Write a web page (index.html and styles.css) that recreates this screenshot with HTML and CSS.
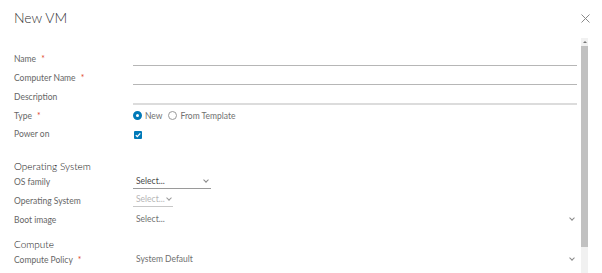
FILE: index.html
```html
<!DOCTYPE html>
<html lang="en">
<head>
    <meta charset="UTF-8">
    <title>New VM</title>
    <link rel="stylesheet" href="styles.css">
</head>
<body>

<div class="modal">
    <div class="modal-header">
        <div class="modal-title">New VM</div>
        <svg class="close" width="9" height="9" viewBox="0 0 9 9">
            <path d="M0.5 0.5 L8.5 8.5 M8.5 0.5 L0.5 8.5" stroke="#8a8a8a" stroke-width="1" fill="none"/>
        </svg>
    </div>

    <div class="modal-body">
        <div class="form">
            <div class="row">
                <div class="label">Name <span class="req">*</span></div>
                <div class="input"></div>
            </div>
            <div class="row">
                <div class="label">Computer Name <span class="req">*</span></div>
                <div class="input"></div>
            </div>
            <div class="row">
                <div class="label">Description</div>
                <div class="input textarea"></div>
            </div>
            <div class="row">
                <div class="label">Type <span class="req">*</span></div>
                <div class="radios">
                    <span class="radio checked"></span><span class="radio-label">New</span>
                    <span class="radio"></span><span class="radio-label">From Template</span>
                </div>
            </div>
            <div class="row">
                <div class="label">Power on</div>
                <div>
                    <span class="checkbox">
                        <svg width="8" height="8" viewBox="0 0 8 8">
                            <path d="M1.8 4.1 L3.3 5.6 L6.3 2.4" stroke="#fff" stroke-width="1.3" fill="none"/>
                        </svg>
                    </span>
                </div>
            </div>

            <div class="section">Operating System</div>
            <div class="row">
                <div class="label">OS family</div>
                <div class="select wide">Select...<span class="chev"></span></div>
            </div>
            <div class="row">
                <div class="label">Operating System</div>
                <div class="select narrow disabled">Select...<span class="chev"></span></div>
            </div>
            <div class="row">
                <div class="label">Boot image</div>
                <div class="select full">Select...<span class="chev"></span></div>
            </div>

            <div class="section compute">Compute</div>
            <div class="row">
                <div class="label">Compute Policy <span class="req">*</span></div>
                <div class="select full">System Default<span class="chev"></span></div>
            </div>
        </div>

        <div class="scrollbar">
            <div class="scroll-up"><span></span></div>
            <div class="scroll-thumb"></div>
            <div class="scroll-track"></div>
        </div>
    </div>
</div>

</body>
</html>
```

FILE: styles.css
```css
body {
    margin: 0;
    background: #fff;
    font-family: 'Lato', 'Open Sans', sans-serif;
    color: #565656;
}

.modal {
    width: 602px;
    height: 273px;
    display: flex;
    flex-direction: column;
    overflow: hidden;
}

.modal-header {
    height: 38px;
    flex-shrink: 0;
    padding: 9px 12px 0 14px;
    box-sizing: border-box;
    display: flex;
    justify-content: space-between;
    align-items: flex-start;
}

.modal-title {
    font-size: 14px;
    line-height: 18px;
    font-weight: 300;
    color: #333;
}

.close {
    margin-top: 5px;
}

.modal-body {
    flex: 1;
    display: flex;
    min-height: 0;
}

.form {
    flex: 1;
    padding: 12px 2px 0 14px;
}

.row {
    display: grid;
    grid-template-columns: 119px 1fr;
    align-items: center;
    height: 18.75px;
    font-size: 8.5px;
}

.label {
    color: #666;
}

.req {
    color: #e0492f;
    margin-left: 3px;
}

.input {
    height: 12px;
    border-bottom: 1px solid #b6b6b6;
}

.input.textarea {
    border-bottom: 2px solid #dcdcdc;
    height: 12px;
    margin-top: 2px;
}

.radios {
    display: flex;
    align-items: center;
}

.radio {
    width: 9px;
    height: 9px;
    box-sizing: border-box;
    border-radius: 50%;
    border: 1px solid #9a9a9a;
    margin-right: 3px;
}

.radio.checked {
    border: 3px solid #0079b8;
    background: #fff;
}

.radio-label {
    color: #707070;
    margin-right: 6px;
}

.checkbox {
    width: 8px;
    height: 8px;
    margin-left: 1px;
    margin-top: 1px;
    background: #0079b8;
    border-radius: 1px;
    display: flex;
}

.select {
    position: relative;
    height: 12px;
    line-height: 11px;
    padding-left: 3px;
    color: #484848;
    border-bottom: 1px solid #9a9a9a;
    box-sizing: content-box;
}

.select.wide {
    width: 75px;
}

.select.narrow {
    width: 37px;
    color: #b5b5b5;
    border-bottom-color: #c8c8c8;
}

.select.full {
    border-bottom: none;
    color: #707070;
}

.chev {
    position: absolute;
    right: 3px;
    top: 2px;
    width: 3px;
    height: 3px;
    border-right: 1px solid #888;
    border-bottom: 1px solid #888;
    transform: rotate(45deg);
}

.select.narrow .chev {
    right: 2px;
    border-color: #999;
}

.section {
    margin-top: 15px;
    height: 14px;
    line-height: 14px;
    font-size: 10px;
    font-weight: 300;
    color: #111;
}

.section.compute {
    margin-top: 8px;
}

.scrollbar {
    width: 7px;
    margin: 0 14px 0 2px;
    display: flex;
    flex-direction: column;
}

.scroll-up {
    height: 8px;
    background: #f1f1f1;
    display: flex;
    justify-content: center;
    align-items: center;
}

.scroll-up span {
    width: 0;
    height: 0;
    border-left: 2px solid transparent;
    border-right: 2px solid transparent;
    border-bottom: 2px solid #777;
}

.scroll-thumb {
    height: 201px;
    background: #c1c1c1;
}

.scroll-track {
    flex: 1;
    background: #f1f1f1;
}
```
